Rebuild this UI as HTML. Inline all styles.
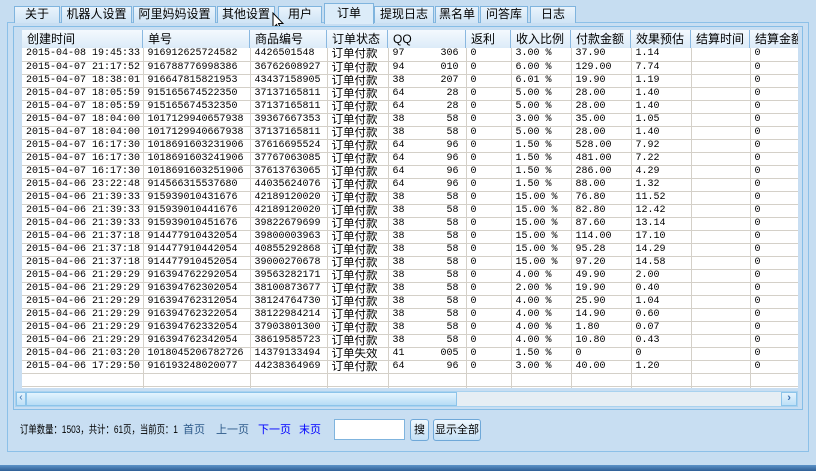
<!DOCTYPE html>
<html><head><meta charset="utf-8"><style>
*{margin:0;padding:0;box-sizing:border-box}
body{width:816px;height:471px;overflow:hidden;background:#c6ddf1;font-family:"Liberation Mono","Noto Sans CJK SC",monospace;font-size:12px;color:#000;position:relative}
.a{position:absolute;white-space:nowrap}
.tab{position:absolute;top:6px;height:17px;border:1px solid #7fb4de;border-bottom:none;background:linear-gradient(#eaf4fc,#cfe4f5);font-family:"Liberation Sans","Noto Sans CJK SC",sans-serif;font-size:12px;text-align:center;line-height:15px;white-space:nowrap}
.cjk{font-family:"Liberation Sans","Noto Sans CJK SC",sans-serif;font-size:12px}
table{border-collapse:collapse;table-layout:fixed;position:absolute;left:22px;top:48px;width:781px}
td{height:13px;border-right:1px solid #d4d0c8;border-bottom:1px solid #d4d0c8;font-size:10px;line-height:12px;padding:0 0 0 4px;white-space:nowrap;overflow:hidden}
td div{height:12px;overflow:hidden}
td.c{font-family:"Liberation Sans","Noto Sans CJK SC",sans-serif;font-size:11.5px;line-height:12px}
.hd{position:absolute;top:30px;height:18px;background:linear-gradient(#f4f9fe,#dcebf8);font-family:"Liberation Sans","Noto Sans CJK SC",sans-serif;font-size:12px;line-height:18px;padding-left:5px;border-right:1px solid #8ab8e0;white-space:nowrap;overflow:hidden}
</style></head><body>
<div class="a" style="left:7px;top:22px;width:802px;height:430px;border:1px solid #8cc0e8;background:#c8def2"></div>
<div class="tab" style="left:14px;width:46px">关于</div>
<div class="tab" style="left:61px;width:71px">机器人设置</div>
<div class="tab" style="left:133px;width:83px">阿里妈妈设置</div>
<div class="tab" style="left:217px;width:58px">其他设置</div>
<div class="tab" style="left:278px;width:44px">用户</div>
<div class="tab" style="left:324px;top:3px;height:21px;width:50px;background:#dcecf9;line-height:19px">订单</div>
<div class="tab" style="left:374px;width:60px">提现日志</div>
<div class="tab" style="left:435px;width:44px">黑名单</div>
<div class="tab" style="left:480px;width:48px">问答库</div>
<div class="tab" style="left:530px;width:46px">日志</div>
<svg class="a" style="left:272px;top:12px" width="12" height="20"><path d="M1 1 L1 16 L4.5 12.5 L7 18 L9 17 L6.5 11.5 L11 11.5 Z" fill="#fff" stroke="#000" stroke-width="1"/></svg>
<div class="a" style="left:13px;top:26px;width:790px;height:384px;border:1px solid #86bde6;background:#c8def2"></div>
<div class="a" style="left:22px;top:30px;width:776px;height:358px;background:#fff"></div>
<div class="a" style="left:22px;top:30px;width:776px;height:358px;overflow:hidden">
<div style="position:relative;left:-22px;top:-30px">
<div class="hd" style="left:22px;width:121px">创建时间</div>
<div class="hd" style="left:143px;width:107px">单号</div>
<div class="hd" style="left:250px;width:77px">商品编号</div>
<div class="hd" style="left:327px;width:61px">订单状态</div>
<div class="hd" style="left:388px;width:78px">QQ</div>
<div class="hd" style="left:466px;width:45px">返利</div>
<div class="hd" style="left:511px;width:60px">收入比例</div>
<div class="hd" style="left:571px;width:60px">付款金额</div>
<div class="hd" style="left:631px;width:60px">效果预估</div>
<div class="hd" style="left:691px;width:59px">结算时间</div>
<div class="hd" style="left:750px;width:60px">结算金额</div>
<table>
<colgroup><col style="width:121px"><col style="width:107px"><col style="width:77px"><col style="width:61px"><col style="width:78px"><col style="width:45px"><col style="width:60px"><col style="width:60px"><col style="width:60px"><col style="width:59px"><col style="width:53px"></colgroup>
<tr><td><div>2015-04-08 19:45:33</div></td><td><div>916912625724582</div></td><td><div>4426501548</div></td><td class="c"><div>订单付款</div></td><td><div>97&nbsp;&nbsp;&nbsp;&nbsp;&nbsp;&nbsp;306</div></td><td><div>0</div></td><td><div>3.00 %</div></td><td><div>37.90</div></td><td><div>1.14</div></td><td></td><td><div>0</div></td></tr>
<tr><td><div>2015-04-07 21:17:52</div></td><td><div>916788776998386</div></td><td><div>36762608927</div></td><td class="c"><div>订单付款</div></td><td><div>94&nbsp;&nbsp;&nbsp;&nbsp;&nbsp;&nbsp;010</div></td><td><div>0</div></td><td><div>6.00 %</div></td><td><div>129.00</div></td><td><div>7.74</div></td><td></td><td><div>0</div></td></tr>
<tr><td><div>2015-04-07 18:38:01</div></td><td><div>916647815821953</div></td><td><div>43437158905</div></td><td class="c"><div>订单付款</div></td><td><div>38&nbsp;&nbsp;&nbsp;&nbsp;&nbsp;&nbsp;207</div></td><td><div>0</div></td><td><div>6.01 %</div></td><td><div>19.90</div></td><td><div>1.19</div></td><td></td><td><div>0</div></td></tr>
<tr><td><div>2015-04-07 18:05:59</div></td><td><div>915165674522350</div></td><td><div>37137165811</div></td><td class="c"><div>订单付款</div></td><td><div>64&nbsp;&nbsp;&nbsp;&nbsp;&nbsp;&nbsp;&nbsp;28</div></td><td><div>0</div></td><td><div>5.00 %</div></td><td><div>28.00</div></td><td><div>1.40</div></td><td></td><td><div>0</div></td></tr>
<tr><td><div>2015-04-07 18:05:59</div></td><td><div>915165674532350</div></td><td><div>37137165811</div></td><td class="c"><div>订单付款</div></td><td><div>64&nbsp;&nbsp;&nbsp;&nbsp;&nbsp;&nbsp;&nbsp;28</div></td><td><div>0</div></td><td><div>5.00 %</div></td><td><div>28.00</div></td><td><div>1.40</div></td><td></td><td><div>0</div></td></tr>
<tr><td><div>2015-04-07 18:04:00</div></td><td><div>1017129940657938</div></td><td><div>39367667353</div></td><td class="c"><div>订单付款</div></td><td><div>38&nbsp;&nbsp;&nbsp;&nbsp;&nbsp;&nbsp;&nbsp;58</div></td><td><div>0</div></td><td><div>3.00 %</div></td><td><div>35.00</div></td><td><div>1.05</div></td><td></td><td><div>0</div></td></tr>
<tr><td><div>2015-04-07 18:04:00</div></td><td><div>1017129940667938</div></td><td><div>37137165811</div></td><td class="c"><div>订单付款</div></td><td><div>38&nbsp;&nbsp;&nbsp;&nbsp;&nbsp;&nbsp;&nbsp;58</div></td><td><div>0</div></td><td><div>5.00 %</div></td><td><div>28.00</div></td><td><div>1.40</div></td><td></td><td><div>0</div></td></tr>
<tr><td><div>2015-04-07 16:17:30</div></td><td><div>1018691603231906</div></td><td><div>37616695524</div></td><td class="c"><div>订单付款</div></td><td><div>64&nbsp;&nbsp;&nbsp;&nbsp;&nbsp;&nbsp;&nbsp;96</div></td><td><div>0</div></td><td><div>1.50 %</div></td><td><div>528.00</div></td><td><div>7.92</div></td><td></td><td><div>0</div></td></tr>
<tr><td><div>2015-04-07 16:17:30</div></td><td><div>1018691603241906</div></td><td><div>37767063085</div></td><td class="c"><div>订单付款</div></td><td><div>64&nbsp;&nbsp;&nbsp;&nbsp;&nbsp;&nbsp;&nbsp;96</div></td><td><div>0</div></td><td><div>1.50 %</div></td><td><div>481.00</div></td><td><div>7.22</div></td><td></td><td><div>0</div></td></tr>
<tr><td><div>2015-04-07 16:17:30</div></td><td><div>1018691603251906</div></td><td><div>37613763065</div></td><td class="c"><div>订单付款</div></td><td><div>64&nbsp;&nbsp;&nbsp;&nbsp;&nbsp;&nbsp;&nbsp;96</div></td><td><div>0</div></td><td><div>1.50 %</div></td><td><div>286.00</div></td><td><div>4.29</div></td><td></td><td><div>0</div></td></tr>
<tr><td><div>2015-04-06 23:22:48</div></td><td><div>914566315537680</div></td><td><div>44035624076</div></td><td class="c"><div>订单付款</div></td><td><div>64&nbsp;&nbsp;&nbsp;&nbsp;&nbsp;&nbsp;&nbsp;96</div></td><td><div>0</div></td><td><div>1.50 %</div></td><td><div>88.00</div></td><td><div>1.32</div></td><td></td><td><div>0</div></td></tr>
<tr><td><div>2015-04-06 21:39:33</div></td><td><div>915939010431676</div></td><td><div>42189120020</div></td><td class="c"><div>订单付款</div></td><td><div>38&nbsp;&nbsp;&nbsp;&nbsp;&nbsp;&nbsp;&nbsp;58</div></td><td><div>0</div></td><td><div>15.00 %</div></td><td><div>76.80</div></td><td><div>11.52</div></td><td></td><td><div>0</div></td></tr>
<tr><td><div>2015-04-06 21:39:33</div></td><td><div>915939010441676</div></td><td><div>42189120020</div></td><td class="c"><div>订单付款</div></td><td><div>38&nbsp;&nbsp;&nbsp;&nbsp;&nbsp;&nbsp;&nbsp;58</div></td><td><div>0</div></td><td><div>15.00 %</div></td><td><div>82.80</div></td><td><div>12.42</div></td><td></td><td><div>0</div></td></tr>
<tr><td><div>2015-04-06 21:39:33</div></td><td><div>915939010451676</div></td><td><div>39822679699</div></td><td class="c"><div>订单付款</div></td><td><div>38&nbsp;&nbsp;&nbsp;&nbsp;&nbsp;&nbsp;&nbsp;58</div></td><td><div>0</div></td><td><div>15.00 %</div></td><td><div>87.60</div></td><td><div>13.14</div></td><td></td><td><div>0</div></td></tr>
<tr><td><div>2015-04-06 21:37:18</div></td><td><div>914477910432054</div></td><td><div>39800003963</div></td><td class="c"><div>订单付款</div></td><td><div>38&nbsp;&nbsp;&nbsp;&nbsp;&nbsp;&nbsp;&nbsp;58</div></td><td><div>0</div></td><td><div>15.00 %</div></td><td><div>114.00</div></td><td><div>17.10</div></td><td></td><td><div>0</div></td></tr>
<tr><td><div>2015-04-06 21:37:18</div></td><td><div>914477910442054</div></td><td><div>40855292868</div></td><td class="c"><div>订单付款</div></td><td><div>38&nbsp;&nbsp;&nbsp;&nbsp;&nbsp;&nbsp;&nbsp;58</div></td><td><div>0</div></td><td><div>15.00 %</div></td><td><div>95.28</div></td><td><div>14.29</div></td><td></td><td><div>0</div></td></tr>
<tr><td><div>2015-04-06 21:37:18</div></td><td><div>914477910452054</div></td><td><div>39000270678</div></td><td class="c"><div>订单付款</div></td><td><div>38&nbsp;&nbsp;&nbsp;&nbsp;&nbsp;&nbsp;&nbsp;58</div></td><td><div>0</div></td><td><div>15.00 %</div></td><td><div>97.20</div></td><td><div>14.58</div></td><td></td><td><div>0</div></td></tr>
<tr><td><div>2015-04-06 21:29:29</div></td><td><div>916394762292054</div></td><td><div>39563282171</div></td><td class="c"><div>订单付款</div></td><td><div>38&nbsp;&nbsp;&nbsp;&nbsp;&nbsp;&nbsp;&nbsp;58</div></td><td><div>0</div></td><td><div>4.00 %</div></td><td><div>49.90</div></td><td><div>2.00</div></td><td></td><td><div>0</div></td></tr>
<tr><td><div>2015-04-06 21:29:29</div></td><td><div>916394762302054</div></td><td><div>38100873677</div></td><td class="c"><div>订单付款</div></td><td><div>38&nbsp;&nbsp;&nbsp;&nbsp;&nbsp;&nbsp;&nbsp;58</div></td><td><div>0</div></td><td><div>2.00 %</div></td><td><div>19.90</div></td><td><div>0.40</div></td><td></td><td><div>0</div></td></tr>
<tr><td><div>2015-04-06 21:29:29</div></td><td><div>916394762312054</div></td><td><div>38124764730</div></td><td class="c"><div>订单付款</div></td><td><div>38&nbsp;&nbsp;&nbsp;&nbsp;&nbsp;&nbsp;&nbsp;58</div></td><td><div>0</div></td><td><div>4.00 %</div></td><td><div>25.90</div></td><td><div>1.04</div></td><td></td><td><div>0</div></td></tr>
<tr><td><div>2015-04-06 21:29:29</div></td><td><div>916394762322054</div></td><td><div>38122984214</div></td><td class="c"><div>订单付款</div></td><td><div>38&nbsp;&nbsp;&nbsp;&nbsp;&nbsp;&nbsp;&nbsp;58</div></td><td><div>0</div></td><td><div>4.00 %</div></td><td><div>14.90</div></td><td><div>0.60</div></td><td></td><td><div>0</div></td></tr>
<tr><td><div>2015-04-06 21:29:29</div></td><td><div>916394762332054</div></td><td><div>37903801300</div></td><td class="c"><div>订单付款</div></td><td><div>38&nbsp;&nbsp;&nbsp;&nbsp;&nbsp;&nbsp;&nbsp;58</div></td><td><div>0</div></td><td><div>4.00 %</div></td><td><div>1.80</div></td><td><div>0.07</div></td><td></td><td><div>0</div></td></tr>
<tr><td><div>2015-04-06 21:29:29</div></td><td><div>916394762342054</div></td><td><div>38619585723</div></td><td class="c"><div>订单付款</div></td><td><div>38&nbsp;&nbsp;&nbsp;&nbsp;&nbsp;&nbsp;&nbsp;58</div></td><td><div>0</div></td><td><div>4.00 %</div></td><td><div>10.80</div></td><td><div>0.43</div></td><td></td><td><div>0</div></td></tr>
<tr><td><div>2015-04-06 21:03:20</div></td><td><div>1018045206782726</div></td><td><div>14379133494</div></td><td class="c"><div>订单失效</div></td><td><div>41&nbsp;&nbsp;&nbsp;&nbsp;&nbsp;&nbsp;005</div></td><td><div>0</div></td><td><div>1.50 %</div></td><td><div>0</div></td><td><div>0</div></td><td></td><td><div>0</div></td></tr>
<tr><td><div>2015-04-06 17:29:50</div></td><td><div>916193248020077</div></td><td><div>44238364969</div></td><td class="c"><div>订单付款</div></td><td><div>64&nbsp;&nbsp;&nbsp;&nbsp;&nbsp;&nbsp;&nbsp;96</div></td><td><div>0</div></td><td><div>3.00 %</div></td><td><div>40.00</div></td><td><div>1.20</div></td><td></td><td><div>0</div></td></tr>
<tr><td></td><td></td><td></td><td></td><td></td><td></td><td></td><td></td><td></td><td></td><td></td></tr>
<tr><td></td><td></td><td></td><td></td><td></td><td></td><td></td><td></td><td></td><td></td><td></td></tr>
</table>
</div></div>
<div class="a" style="left:15px;top:391px;width:783px;height:16px;background:#e6eef4;border:1px solid #a9d2ef"></div>
<div class="a" style="left:16px;top:392px;width:10px;height:14px;background:linear-gradient(#e4f3fd,#bde0f7);border:1px solid #8cc4ea;color:#3a6fb0;font-size:10px;line-height:12px;text-align:center">‹</div>
<div class="a" style="left:26px;top:392px;width:431px;height:14px;background:linear-gradient(#e4f4fe,#b6dcf5);border:1px solid #8cc4ea"></div>
<div class="a" style="left:781px;top:392px;width:16px;height:14px;background:linear-gradient(#e4f3fd,#bde0f7);border:1px solid #8cc4ea;color:#3a6fb0;font-size:11px;line-height:12px;text-align:center;font-weight:bold">›</div>
<div class="a cjk" style="left:20px;top:422px;font-size:11px;line-height:16px;transform:scaleX(0.76);transform-origin:0 0">订单数量：1503，共计：61页，当前页：1</div>
<div class="a cjk" style="left:183px;top:422px;font-size:11px;line-height:16px;color:#2d5a8a">首页</div>
<div class="a cjk" style="left:216px;top:422px;font-size:11px;line-height:16px;color:#2d5a8a">上一页</div>
<div class="a cjk" style="left:258px;top:422px;font-size:11px;line-height:16px;color:#0000ff">下一页</div>
<div class="a cjk" style="left:299px;top:422px;font-size:11px;line-height:16px;color:#0000ff">末页</div>
<div class="a" style="left:334px;top:419px;width:71px;height:21px;background:#fff;border:1px solid #7fb4de"></div>
<div class="a cjk" style="left:410px;top:419px;width:19px;height:22px;border:1px solid #6fa8d8;border-radius:3px;background:linear-gradient(#f0f8fe,#c4e0f5);text-align:center;line-height:20px;font-size:11px">搜</div>
<div class="a cjk" style="left:433px;top:419px;width:48px;height:22px;border:1px solid #6fa8d8;border-radius:3px;background:linear-gradient(#f0f8fe,#c4e0f5);text-align:center;line-height:20px;font-size:11px">显示全部</div>
<div class="a" style="left:0;top:465px;width:816px;height:6px;background:linear-gradient(#5c93c8,#2f5f95)"></div>
</body></html>
